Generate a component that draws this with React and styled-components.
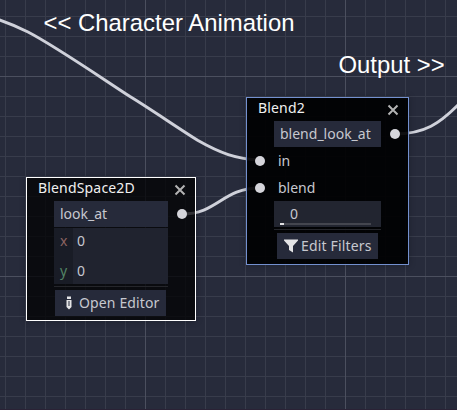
import React from 'react';
import styled, { createGlobalStyle } from 'styled-components';

const GlobalStyle = createGlobalStyle`
  * { box-sizing: border-box; }
  body { margin: 0; background: #272b3b; }
`;

const Graph = styled.main`
  position: relative;
  width: 457px;
  height: 410px;
  overflow: hidden;
  border-bottom: 1px solid #2a2235;
  background-color: #272b3b;
  background-image:
    linear-gradient(90deg, #4b4f5e 1px, transparent 1px),
    linear-gradient(#4b4f5e 1px, transparent 1px),
    linear-gradient(90deg, #383c4b 1px, transparent 1px),
    linear-gradient(#383c4b 1px, transparent 1px);
  background-size: 200px 200px, 200px 200px, 20px 20px, 20px 20px;
  background-position: 145px 0, 0 76px, 5px 0, 0 16px;
  font: 14px/20px "Noto Sans", sans-serif;
  color: #c6c8cf;
`;

const Wires = styled.svg`
  position: absolute;
  inset: 0;
  fill: none;
  stroke: #cfd1da;
  stroke-width: 3;
`;

const Caption = styled.div`
  position: absolute;
  left: ${(p) => p.$x}px;
  top: ${(p) => p.$y}px;
  font: 23.9px/28px "Liberation Sans", Arial, sans-serif;
  color: #fff;
  white-space: nowrap;
`;

const Node = styled.section`
  position: absolute;
  left: ${(p) => p.$x}px;
  top: ${(p) => p.$y}px;
  width: ${(p) => p.$w}px;
  height: ${(p) => p.$h}px;
  border: 1px solid ${(p) => p.$edge};
  background: ${(p) => p.$fill};
  box-shadow: 0 0 6px rgba(12, 14, 24, 0.35);
`;

const NodeHeader = styled.header`
  display: flex;
  justify-content: space-between;
  align-items: center;
  height: 23px;
  padding: 0 9px 0 11px;
  color: #f0f0f0;
`;

const Title = styled.span`
  font-size: 14px;
  line-height: 20px;
  letter-spacing: 0.17px;
  margin-top: -3px;
`;

const CloseIcon = styled.svg`
  width: 12px;
  height: 12px;
  stroke: #b3b3b3;
  stroke-width: 2;
`;

const NodeBody = styled.div`
  display: flex;
  flex-direction: column;
  padding-left: 27px;
`;

const NameField = styled.div`
  width: ${(p) => p.$w}px;
  height: 26px;
  padding-left: 6px;
  line-height: 25px;
  background: #262a3a;
`;

const VectorField = styled.div`
  width: 114px;
  margin-top: 1px;
  background: #20232f;
`;

const VectorRow = styled.div`
  display: flex;
  height: ${(p) => p.$h}px;
  line-height: ${(p) => p.$line}px;
`;

const Axis = styled.span`
  width: 19px;
  padding-left: 6px;
  background: #191c26;
  color: ${(p) => p.$tint};
`;

const AxisValue = styled.span`
  padding-left: 4px;
`;

const Divider = styled.hr`
  width: ${(p) => p.$w}px;
  height: 1px;
  margin: 2px 0 3px;
  border: 0;
  background: #25262b;
`;

const ActionButton = styled.button`
  display: flex;
  align-items: center;
  gap: ${(p) => p.$gap}px;
  width: ${(p) => p.$w}px;
  height: 26px;
  margin: 0 0 0 ${(p) => p.$indent}px;
  padding: 0 0 1px ${(p) => p.$pad}px;
  border: 0;
  background: #262a3a;
  color: inherit;
  font: inherit;
  letter-spacing: ${(p) => p.$track}px;
  white-space: nowrap;
`;

const ActionIcon = styled.svg`
  flex: none;
  fill: #e4e4e6;
`;

const PortLabel = styled.div`
  height: 27px;
  padding-left: 4px;
  line-height: 27px;
`;

const AmountField = styled.div`
  display: flex;
  flex-direction: column;
  width: 107px;
  height: 26px;
  padding: 0 10px 0 6px;
  background: #222530;
`;

const Amount = styled.span`
  height: 22px;
  padding-left: 10px;
  line-height: 25px;
`;

const AmountTrack = styled.div`
  height: 2px;
  background: #44464f;
`;

const AmountBar = styled.div`
  width: 4px;
  height: 2px;
  background: #e0e0e2;
`;

const Port = styled.i`
  position: absolute;
  left: ${(p) => p.$x - 5}px;
  top: ${(p) => p.$y - 5}px;
  width: 10px;
  height: 10px;
  border-radius: 50%;
  background: #d5d5db;
`;

const Close = () => (
  <CloseIcon viewBox="0 0 12 12">
    <path d="M1.500 1.500 10.500 10.500M10.500 1.500 1.500 10.500" />
  </CloseIcon>
);

export default function App() {
  return (
    <>
      <GlobalStyle />
      <Graph>
        <Wires width="457" height="410">
          <path d="M-2 19.500C8 23 18 27 28 32C55 46 100 77 130 96.500C152 110 175 126 198 140.500C220 153 236 159 260 160" />
          <path d="M182 214C218 214 222 188 260 188" />
          <path d="M395 134C425 134 440 123 458 105" />
        </Wires>
        <Caption $x={43.5} $y={9}>&lt;&lt; Character Animation</Caption>
        <Caption $x={338.5} $y={51}>Output &gt;&gt;</Caption>

        <Node $x={26} $y={177} $w={170} $h={144} $edge="#fff" $fill="rgba(1, 1, 3, 0.77)">
          <NodeHeader>
            <Title>BlendSpace2D</Title>
            <Close />
          </NodeHeader>
          <NodeBody>
            <NameField $w={114}>look_at</NameField>
            <VectorField>
              <VectorRow $h={27} $line={26}>
                <Axis $tint="#8c6361">x</Axis>
                <AxisValue>0</AxisValue>
              </VectorRow>
              <VectorRow $h={29} $line={32}>
                <Axis $tint="#538465">y</Axis>
                <AxisValue>0</AxisValue>
              </VectorRow>
            </VectorField>
            <Divider $w={114} />
            <ActionButton $w={111} $indent={1} $pad={10} $gap={6} $track={0.13}>
              <ActionIcon width="8" height="14" viewBox="0 0 8 14">
                <path d="M2 0.500H6V3H2ZM1.500 4H6.500V11L4 13.500 1.500 11ZM3.500 5V10H4.500V5Z" fillRule="evenodd" />
              </ActionIcon>
              Open Editor
            </ActionButton>
          </NodeBody>
        </Node>

        <Node $x={246} $y={97} $w={163} $h={168} $edge="#7390cf" $fill="rgba(0, 0, 1, 0.93)">
          <NodeHeader>
            <Title>Blend2</Title>
            <Close />
          </NodeHeader>
          <NodeBody>
            <NameField $w={107}>blend_look_at</NameField>
            <PortLabel>in</PortLabel>
            <PortLabel>blend</PortLabel>
            <AmountField>
              <Amount>0</Amount>
              <AmountTrack><AmountBar /></AmountTrack>
            </AmountField>
            <Divider $w={107} />
            <ActionButton $w={101} $indent={3} $pad={7} $gap={3} $track={0.17}>
              <ActionIcon width="14" height="14" viewBox="0 0 14 14">
                <path d="M0 0.500H14V1.500L9 7V13.500L5 11V7L0 1.500Z" />
              </ActionIcon>
              Edit Filters
            </ActionButton>
          </NodeBody>
        </Node>

        <Port $x={182} $y={214} />
        <Port $x={395} $y={134} />
        <Port $x={260} $y={161} />
        <Port $x={260} $y={188} />
      </Graph>
    </>
  );
}
